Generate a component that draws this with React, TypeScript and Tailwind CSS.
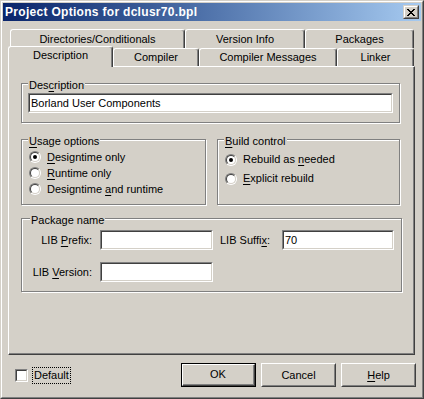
import React from "react";

function U({ children }: { children: React.ReactNode }) {
  return <span className="underline underline-offset-[2px] decoration-[1px]">{children}</span>;
}

function CloseBtn() {
  return (
    <div className="flex h-[14px] w-[16px] border border-t-[#D4D0C8] border-l-[#D4D0C8] border-b-[#404040] border-r-[#404040] bg-[#D4D0C8]">
      <div className="flex flex-1 items-center justify-center border border-t-white border-l-white border-b-[#808080] border-r-[#808080]">
        <svg width="8" height="7" viewBox="0 0 8 7" shapeRendering="crispEdges">
          <rect x="0" y="0" width="2" height="1" fill="#000" />
          <rect x="6" y="0" width="2" height="1" fill="#000" />
          <rect x="1" y="1" width="2" height="1" fill="#000" />
          <rect x="5" y="1" width="2" height="1" fill="#000" />
          <rect x="2" y="2" width="4" height="1" fill="#000" />
          <rect x="3" y="3" width="2" height="1" fill="#000" />
          <rect x="2" y="4" width="4" height="1" fill="#000" />
          <rect x="1" y="5" width="2" height="1" fill="#000" />
          <rect x="5" y="5" width="2" height="1" fill="#000" />
          <rect x="0" y="6" width="2" height="1" fill="#000" />
          <rect x="6" y="6" width="2" height="1" fill="#000" />
        </svg>
      </div>
    </div>
  );
}

function Tab({ className, children }: { className: string; children: React.ReactNode }) {
  return (
    <div
      className={`relative flex justify-center rounded-t-[3px] border-t border-l border-r border-t-white border-l-white border-r-[#404040] bg-[#D4D0C8] shadow-[inset_-1px_0_0_#808080] ${className}`}
    >
      {children}
    </div>
  );
}

function Radio({ checked }: { checked?: boolean }) {
  return (
    <span className="flex h-[12px] w-[12px] shrink-0 rounded-full border border-t-[#808080] border-l-[#808080] border-b-white border-r-white">
      <span className="flex flex-1 items-center justify-center rounded-full border border-t-[#404040] border-l-[#404040] border-b-[#D4D0C8] border-r-[#D4D0C8] bg-white">
        {checked && <span className="h-[4px] w-[4px] rounded-full bg-black" />}
      </span>
    </span>
  );
}

function Field({ className, value }: { className: string; value?: string }) {
  return (
    <div className={`flex border border-t-[#808080] border-l-[#808080] border-b-white border-r-white ${className}`}>
      <div className="flex flex-1 items-center border border-t-[#404040] border-l-[#404040] border-b-[#D4D0C8] border-r-[#D4D0C8] bg-white pl-[1px]">
        {value}
      </div>
    </div>
  );
}

function Group({ className, legend, legendClass, children }: { className: string; legend: React.ReactNode; legendClass: string; children?: React.ReactNode }) {
  return (
    <div className={`relative flex flex-col border border-[#808080] shadow-[1px_1px_0_#ffffff,inset_1px_1px_0_#ffffff] ${className}`}>
      <span className={`absolute top-[-5px] bg-[#D4D0C8] px-[1px] leading-[13px] ${legendClass}`}>{legend}</span>
      {children}
    </div>
  );
}

function Btn({ children, def }: { children: React.ReactNode; def?: boolean }) {
  if (def) {
    return (
      <div className="flex h-[24px] w-[75px] border border-black">
        <div className="flex flex-1 border border-t-white border-l-white border-b-[#404040] border-r-[#404040]">
          <div className="flex flex-1 items-center justify-center border-b border-r border-b-[#808080] border-r-[#808080]">{children}</div>
        </div>
      </div>
    );
  }
  return (
    <div className="flex h-[24px] w-[75px] border border-t-white border-l-white border-b-[#404040] border-r-[#404040]">
      <div className="flex flex-1 items-center justify-center border border-t-[#D4D0C8] border-l-[#D4D0C8] border-b-[#808080] border-r-[#808080]">
        {children}
      </div>
    </div>
  );
}

export default function App() {
  return (
    <div className="flex h-[399px] w-[424px] border border-t-[#D4D0C8] border-l-[#D4D0C8] border-b-[#404040] border-r-[#404040] bg-[#D4D0C8] font-['Liberation_Sans',Arial,sans-serif] text-[11px] leading-[13px] text-black">
      <div className="flex flex-1 flex-col border border-t-white border-l-white border-b-[#808080] border-r-[#808080] p-[1px]">
        {/* Title bar */}
        <div className="flex h-[18px] items-center bg-linear-to-r from-[#0A246A] to-[#A6CAF0] pl-[2px] pr-[2px]">
          <span className="flex-1 text-[12px] font-bold tracking-[0.3px] text-white">Project Options for dclusr70.bpl</span>
          <CloseBtn />
        </div>

        {/* Tabs row 1 */}
        <div className="mt-[8px] flex h-[19px] pl-[7px]">
          <Tab className="h-[19px] w-[175px] items-center">Directories/Conditionals</Tab>
          <Tab className="h-[19px] w-[120px] items-center">Version Info</Tab>
          <Tab className="h-[19px] w-[109px] items-center">Packages</Tab>
        </div>
        {/* Tabs row 2 */}
        <div className="flex h-[18px] pl-[5px]">
          <Tab className="z-10 -mt-[2px] h-[21px] w-[105px] items-start pt-[2px]">Description</Tab>
          <Tab className="h-[18px] w-[86px] items-center">Compiler</Tab>
          <Tab className="h-[18px] w-[138px] items-center">Compiler Messages</Tab>
          <Tab className="h-[18px] w-[77px] items-center">Linker</Tab>
        </div>

        {/* Panel */}
        <div className="ml-[5px] flex h-[289px] w-[407px] flex-col border border-t-white border-l-white border-b-[#404040] border-r-[#404040] pl-[12px] shadow-[inset_-1px_-1px_0_#808080]">
          <Group
            className="mt-[16px] h-[40px] w-[379px] pl-[6px] pt-[9px]"
            legendClass="left-[6px]"
            legend={<>Des<U>c</U>ription</>}
          >
            <Field className="h-[20px] w-[365px]" value="Borland User Components" />
          </Group>

          <div className="mt-[16px] flex gap-[11px]">
            <Group
              className="h-[66px] w-[185px] pl-[7px] pt-[9px]"
              legendClass="left-[6px]"
              legend={<><U>U</U>sage options</>}
            >
              <div className="flex h-[16px] items-center gap-[6px]">
                <Radio checked />
                <span><U>D</U>esigntime only</span>
              </div>
              <div className="flex h-[16px] items-center gap-[6px]">
                <Radio />
                <span><U>R</U>untime only</span>
              </div>
              <div className="flex h-[16px] items-center gap-[6px]">
                <Radio />
                <span>Designtime <U>a</U>nd runtime</span>
              </div>
            </Group>
            <Group
              className="h-[66px] w-[183px] pl-[7px] pt-[10px]"
              legendClass="left-[6px]"
              legend={<><U>B</U>uild control</>}
            >
              <div className="flex h-[19px] items-center gap-[6px]">
                <Radio checked />
                <span>Rebuild as <U>n</U>eeded</span>
              </div>
              <div className="flex h-[19px] items-center gap-[6px]">
                <Radio />
                <span><U>E</U>xplicit rebuild</span>
              </div>
            </Group>
          </div>

          <Group
            className="mt-[13px] h-[74px] w-[381px] pt-[11px]"
            legendClass="left-[8px]"
            legend="Package name"
          >
            <div className="flex h-[20px] items-center">
              <span className="w-[70px] text-right">LIB <U>P</U>refix:</span>
              <Field className="ml-[8px] h-[20px] w-[113px]" />
              <span className="ml-[7px] w-[62px]">LIB Suffi<U>x</U>:</span>
              <Field className="h-[20px] w-[112px]" value="70" />
            </div>
            <div className="mt-[12px] flex h-[20px] items-center">
              <span className="w-[70px] text-right">LIB <U>V</U>ersion:</span>
              <Field className="ml-[8px] h-[20px] w-[113px]" />
            </div>
          </Group>
        </div>

        {/* Bottom */}
        <div className="mt-[8px] flex h-[24px] items-center pl-[12px] pr-[5px]">
          <span className="flex h-[13px] w-[13px] border border-t-[#808080] border-l-[#808080] border-b-white border-r-white">
            <span className="flex-1 border border-t-[#404040] border-l-[#404040] border-b-[#D4D0C8] border-r-[#D4D0C8] bg-white" />
          </span>
          <span className="ml-[4px] flex h-[17px] items-center border border-dotted border-black px-[1px]">Default</span>
          <div className="ml-auto flex gap-[5px]">
            <Btn def>OK</Btn>
            <Btn>Cancel</Btn>
            <Btn><U>H</U>elp</Btn>
          </div>
        </div>
      </div>
    </div>
  );
}
